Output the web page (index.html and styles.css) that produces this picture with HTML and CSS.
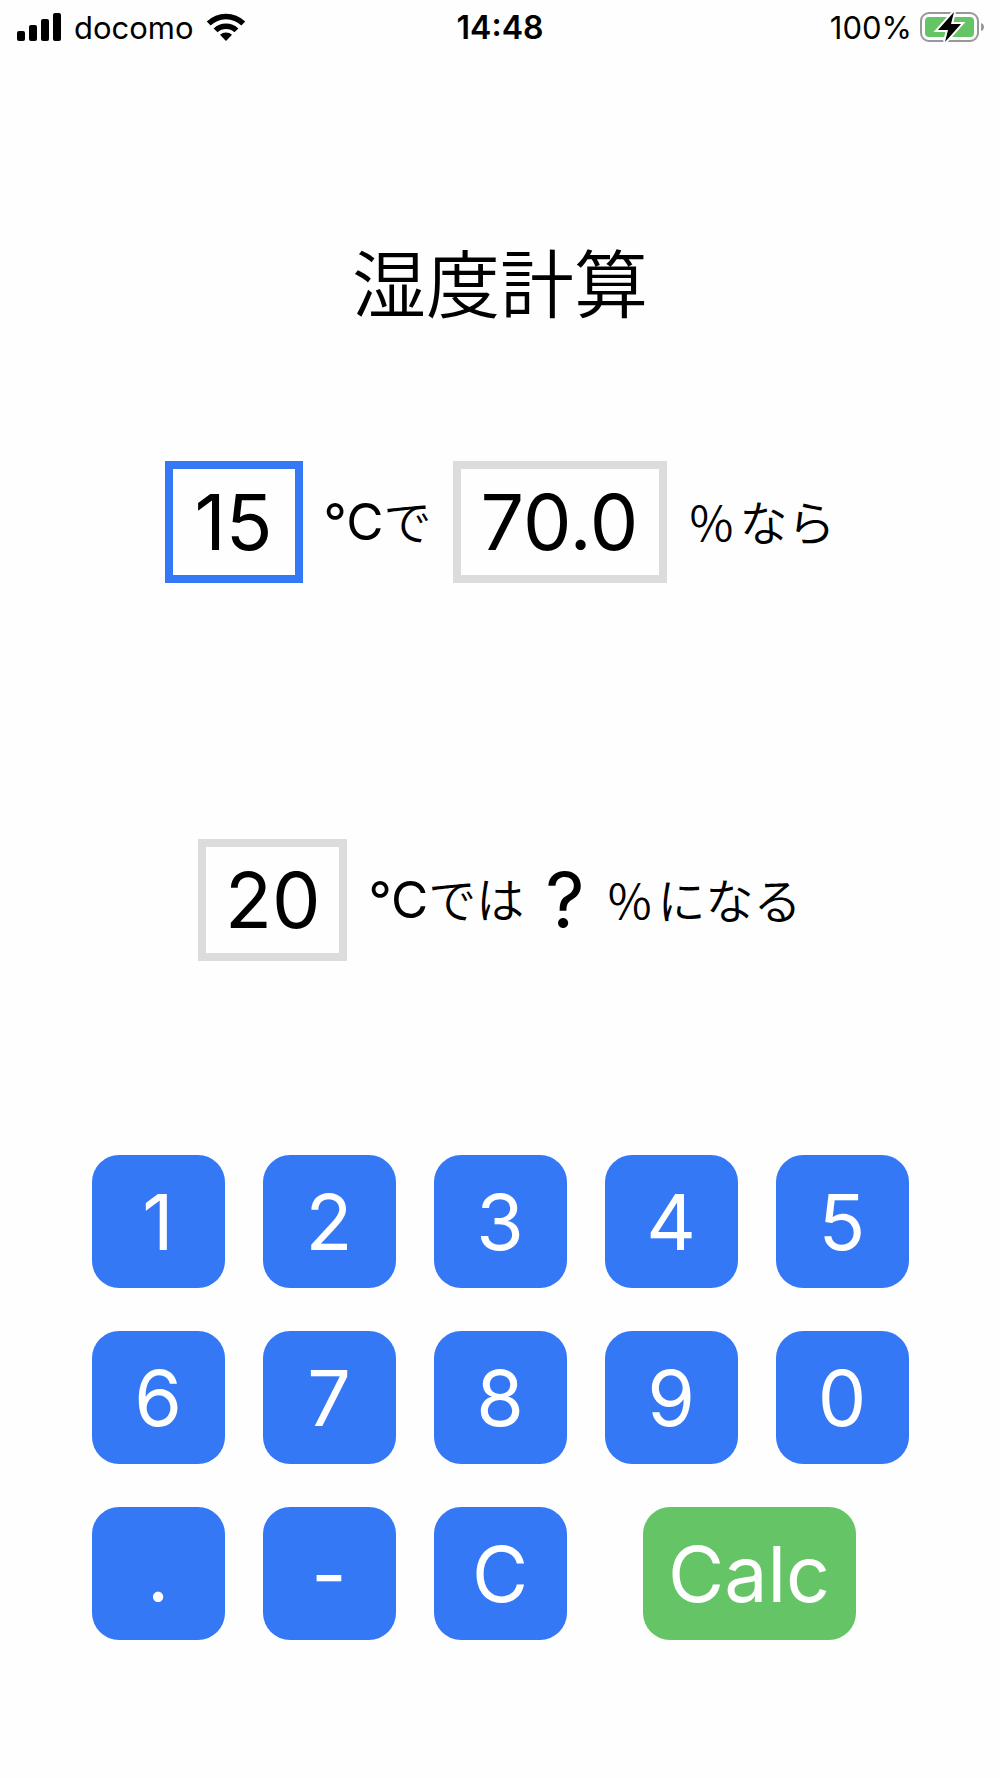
FILE: index.html
```
<!DOCTYPE html>
<html lang="ja">
<head>
    <meta charset="UTF-8">
    <meta name="viewport" content="width=device-width, initial-scale=1">
    <title>湿度計算</title>
    <link rel="stylesheet" href="styles.css">
</head>
<body>
    <header class="status-bar">
        <div class="status-left">
            <svg class="signal-icon" width="46" height="30" viewBox="0 0 46 30" aria-hidden="true">
                <rect x="1" y="19" width="8" height="10" rx="2"/>
                <rect x="13" y="13" width="8" height="16" rx="2"/>
                <rect x="25" y="7" width="8" height="22" rx="2"/>
                <rect x="37" y="1" width="8" height="28" rx="2"/>
            </svg>
            <span class="carrier">docomo</span>
            <svg class="wifi-icon" width="40" height="30" viewBox="0 0 40 30" aria-hidden="true">
                <path d="M0.8 9.6 A27.5 27.5 0 0 1 39.2 9.6 L35.4 13.6 A22 22 0 0 0 4.6 13.6 Z"/>
                <path d="M7.6 16.4 A18 18 0 0 1 32.4 16.4 L28.4 20.2 A12.4 12.4 0 0 0 11.6 20.2 Z"/>
                <path d="M14 22.8 A9 9 0 0 1 26 22.8 L20 29 Z"/>
            </svg>
        </div>
        <div class="clock">14:48</div>
        <div class="status-right">
            <span class="battery-level">100%</span>
            <svg class="battery-icon" width="64" height="32" viewBox="0 0 64 32" aria-hidden="true">
                <rect class="battery-case" x="1" y="2" width="57" height="28" rx="8"/>
                <path class="battery-tip" d="M61 12 Q64 13 64 16 Q64 19 61 20 Z"/>
                <rect class="battery-fill" x="5" y="6" width="49" height="20" rx="4"/>
                <path class="battery-bolt" d="M34 1 L18 19 H28 L25 31 L41 13 H31 Z"/>
            </svg>
        </div>
    </header>

    <main class="calculator">
        <h1>湿度計算</h1>

        <form id="humidityForm">
            <div class="row">
                <input class="field active" id="tempFrom" type="text" inputmode="none" value="15">
                <label for="tempFrom"><span class="unit">°C</span>で</label>
                <input class="field wide" id="humidityFrom" type="text" inputmode="none" value="70.0">
                <label for="humidityFrom"><span class="percent">%</span>なら</label>
            </div>

            <div class="row">
                <input class="field medium" id="tempTo" type="text" inputmode="none" value="20">
                <label for="tempTo"><span class="unit">°C</span>では</label>
                <output class="result" id="result" for="tempFrom humidityFrom tempTo">?</output>
                <label for="result"><span class="percent">%</span>になる</label>
            </div>

            <div class="keypad">
                <div class="key-row">
                    <button type="button" class="key">1</button>
                    <button type="button" class="key">2</button>
                    <button type="button" class="key">3</button>
                    <button type="button" class="key">4</button>
                    <button type="button" class="key">5</button>
                </div>
                <div class="key-row">
                    <button type="button" class="key">6</button>
                    <button type="button" class="key">7</button>
                    <button type="button" class="key">8</button>
                    <button type="button" class="key">9</button>
                    <button type="button" class="key">0</button>
                </div>
                <div class="key-row">
                    <button type="button" class="key">.</button>
                    <button type="button" class="key">-</button>
                    <button type="button" class="key">C</button>
                    <button type="submit" class="key calc">Calc</button>
                </div>
            </div>
        </form>
    </main>

    <script>
        const form = document.getElementById('humidityForm');
        const result = document.getElementById('result');
        let current = document.getElementById('tempFrom');

        // Field selection
        document.querySelectorAll('.field').forEach(function(field) {
            field.addEventListener('focus', function() {
                current.classList.remove('active');
                current = field;
                current.classList.add('active');
            });
        });

        // Keypad input
        document.querySelectorAll('.key:not(.calc)').forEach(function(key) {
            key.addEventListener('click', function() {
                current.value = key.textContent === 'C' ? '' : current.value + key.textContent;
            });
        });

        // Saturated vapor pressure (Tetens)
        function saturation(t) {
            return 6.1078 * Math.pow(10, 7.5 * t / (t + 237.3));
        }

        form.addEventListener('submit', function(e) {
            e.preventDefault();
            const from = parseFloat(form.tempFrom.value);
            const to = parseFloat(form.tempTo.value);
            const humidity = parseFloat(form.humidityFrom.value);
            const value = humidity * saturation(from) * (to + 273.15) / (saturation(to) * (from + 273.15));
            result.textContent = isNaN(value) ? '?' : value.toFixed(1);
        });
    </script>
</body>
</html>
```

FILE: styles.css
```
:root {
    --blue: #3478f6;
    --green: #65c466;
    --field-border: #dcdcdd;
    --text: #000000;
    --background: #fefefe;
}

* {
    margin: 0;
    padding: 0;
    box-sizing: border-box;
}

body {
    font-family: Inter, 'Noto Sans CJK JP', sans-serif;
    background-color: var(--background);
    color: var(--text);
}

.status-bar {
    display: grid;
    grid-template-columns: 1fr auto 1fr;
    align-items: center;
    height: 54px;
    padding: 0 16px;
    font-size: 31px;
}

.status-left,
.status-right {
    display: flex;
    align-items: center;
}

.status-left {
    gap: 12px;
}

.status-right {
    justify-content: flex-end;
    gap: 8px;
}

.clock {
    font-size: 32px;
    font-weight: 600;
}

.battery-case {
    fill: none;
    stroke: #98989a;
    stroke-width: 2;
}

.battery-tip {
    fill: #98989a;
}

.battery-fill {
    fill: var(--green);
}

.battery-bolt {
    stroke: var(--background);
    stroke-width: 4;
    paint-order: stroke;
}

.calculator {
    padding-top: 172px;
}

h1 {
    font-family: 'Noto Sans CJK JP', sans-serif;
    font-size: 74px;
    font-weight: 350;
    line-height: 108px;
    text-align: center;
    margin-bottom: 127px;
}

.row {
    display: flex;
    justify-content: center;
    align-items: center;
    gap: 21px;
    margin-bottom: 256px;
}

.row + .row {
    margin-bottom: 194px;
}

.field {
    width: 138px;
    height: 122px;
    border: 8px solid var(--field-border);
    border-radius: 0;
    background: none;
    color: var(--text);
    font-family: inherit;
    font-size: 77px;
    text-align: center;
}

.field.active {
    border-color: var(--blue);
    outline: none;
}

.field.medium {
    width: 149px;
}

.field.wide {
    width: 214px;
}

label {
    padding-bottom: 4px;
    font-family: 'Noto Sans CJK JP', sans-serif;
    font-size: 48px;
    font-weight: 350;
    line-height: 72px;
    white-space: nowrap;
}

.unit {
    font-family: Inter, sans-serif;
    font-size: 51px;
    font-weight: 400;
}

.percent {
    margin: 0 6px 0 2px;
}

.result {
    font-size: 77px;
}

.keypad {
    display: flex;
    flex-direction: column;
    gap: 43px;
    width: 817px;
    max-width: 100%;
    margin: 0 auto;
}

.key-row {
    display: flex;
    gap: 38px;
}

.key {
    width: 133px;
    height: 133px;
    border: none;
    border-radius: 27px;
    background-color: var(--blue);
    color: #ffffff;
    font-family: inherit;
    font-size: 77px;
    cursor: pointer;
}

.key.calc {
    width: 213px;
    margin-left: 38px;
    background-color: var(--green);
}
```
